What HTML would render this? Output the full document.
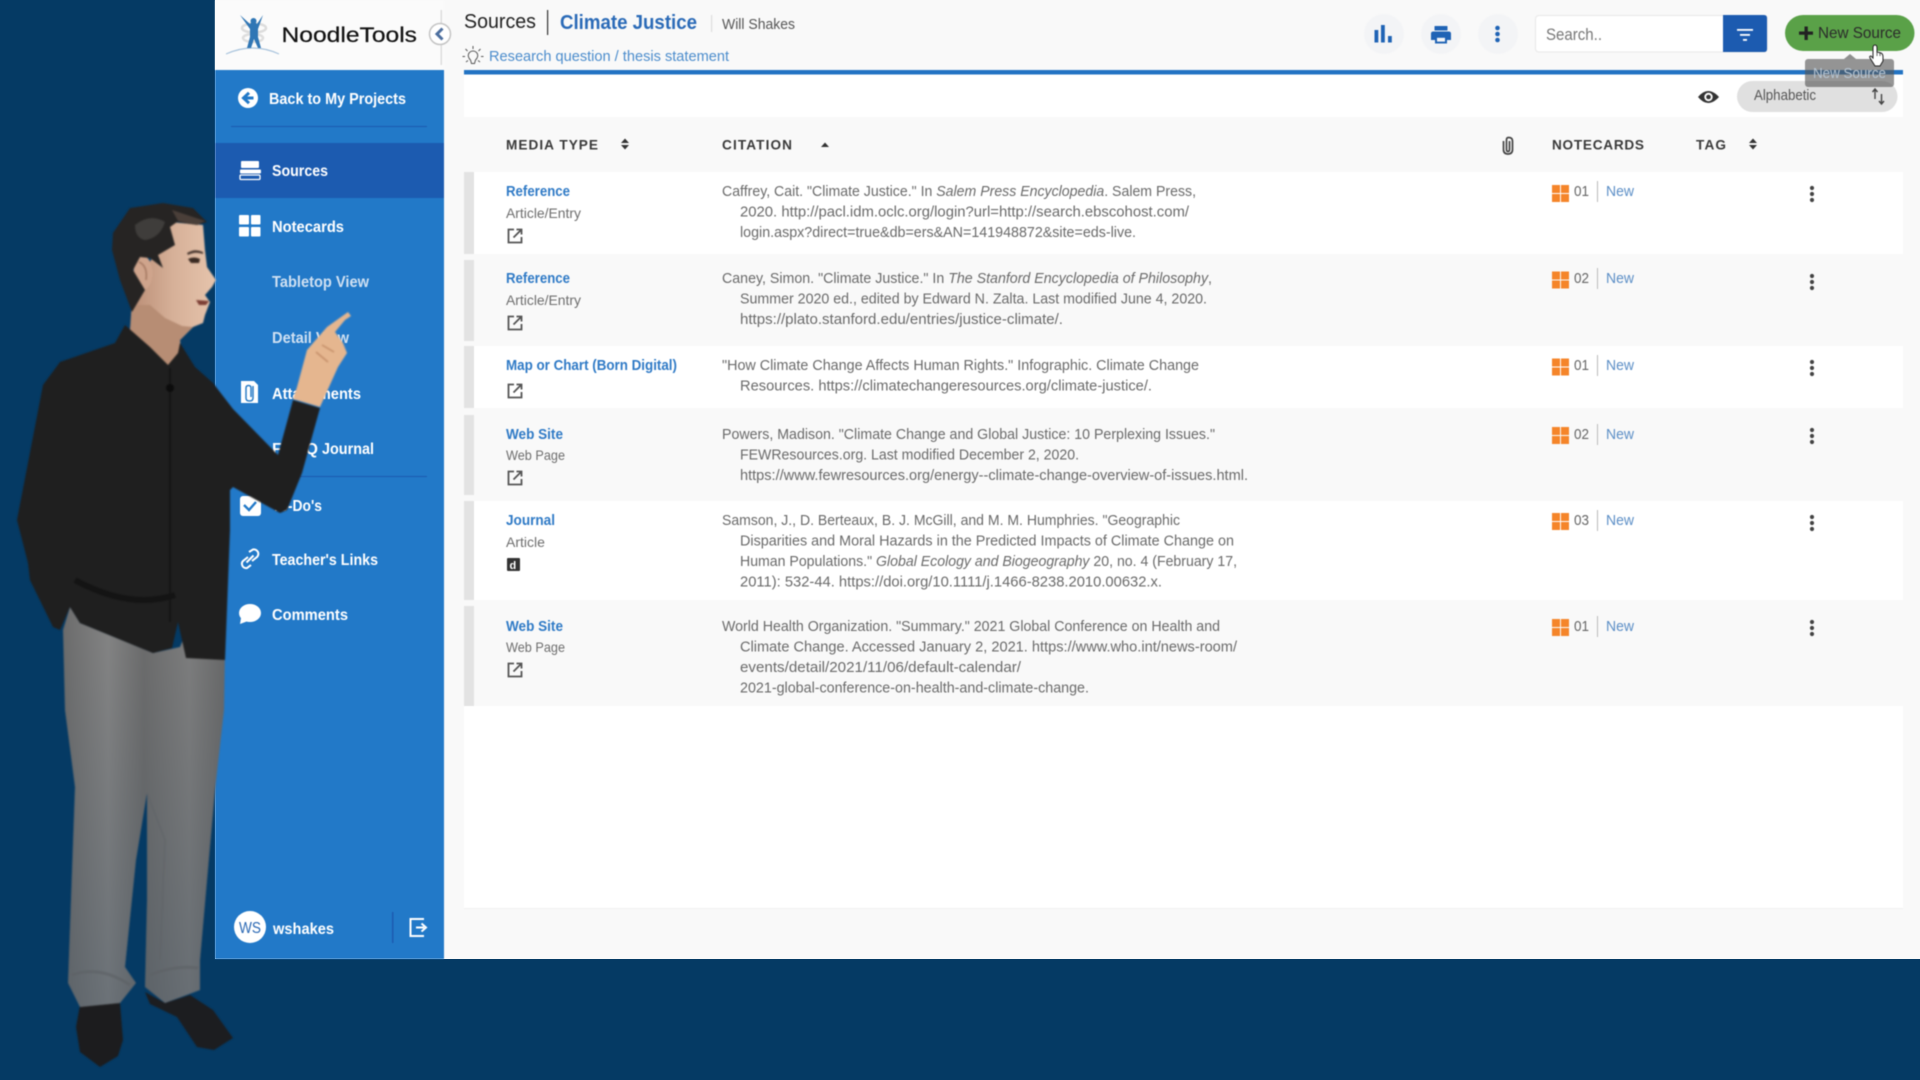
<!DOCTYPE html>
<html><head><meta charset="utf-8"><title>NoodleTools</title>
<style>
html,body{margin:0;padding:0;width:1920px;height:1080px;overflow:hidden;background:#053a64}
#under{position:absolute;left:215px;top:0;width:1705px;height:959px;background:#f9f9f9}
svg{display:block;position:absolute;left:0;top:0}
text{font-family:"Liberation Sans",sans-serif;white-space:pre}
.c{font-size:14.6px;fill:#6a6a6a}
.l{font-size:14.6px;fill:#2f7ac6;font-weight:bold}
.s{font-size:14px;fill:#6e6e6e}
.n{font-size:15px;fill:#666}
.w{font-size:14.6px;fill:#5b8ec6}
.h{font-size:13.6px;font-weight:bold;fill:#3a3a3a}
.m{font-size:16px;font-weight:bold;fill:#fff}
.m2{font-size:16px;font-weight:bold;fill:#cfe0f2}
</style></head><body>
<div id="under"></div>
<svg width="1920" height="1080" viewBox="0 0 1920 1080" xmlns="http://www.w3.org/2000/svg" style="filter:blur(.4px)">
<defs>
<linearGradient id="pants" x1="0" y1="0" x2="1" y2="0"><stop offset="0" stop-color="#6c6c6c"/><stop offset=".28" stop-color="#848484"/><stop offset=".5" stop-color="#6c6c6c"/><stop offset=".78" stop-color="#7e7e7e"/><stop offset="1" stop-color="#696969"/></linearGradient>
<linearGradient id="dim" x1="0" y1="0" x2="0" y2="1"><stop offset="0" stop-color="#3e4c58" stop-opacity="0"/><stop offset="1" stop-color="#3e5060" stop-opacity=".35"/></linearGradient>
<linearGradient id="skin" x1="0" y1="0" x2="1" y2="0"><stop offset="0" stop-color="#b98c74"/><stop offset=".5" stop-color="#d6b098"/><stop offset="1" stop-color="#e6c4ac"/></linearGradient>
<g id="ext" fill="none" stroke="#555" stroke-width="1.800"><path d="M-1-6.500H-6.500V6.500H6.500V1"/><path d="M-1.500 1.500L6-6M1.500-6.500H6.500V-1.500"/></g>
<g id="grid" fill="#f5852a"><rect x="0" y="0" width="8" height="8"/><rect x="9" y="0" width="8" height="8"/><rect x="0" y="9" width="8" height="8"/><rect x="9" y="9" width="8" height="8"/></g>
<g id="keb" fill="#444"><circle cx="0" cy="-6" r="2.100"/><circle cx="0" cy="0" r="2.100"/><circle cx="0" cy="6" r="2.100"/></g>
<g id="sort" fill="#333"><path d="M-4-1L0-5.500 4-1Z"/><path d="M-4 1L0 5.500 4 1Z"/></g>
</defs>

<!-- sidebar -->
<rect x="215" y="70" width="229" height="889" fill="#2279c8"/>
<rect x="215" y="0" width="229" height="70" fill="#fbfbfb"/>
<rect x="215" y="143" width="229" height="55" fill="#1c5bb0"/>
<rect x="231" y="126" width="196" height="1" fill="#1c5bb0"/>
<rect x="231" y="476" width="196" height="1" fill="#1c5bb0"/>

<!-- logo -->
<path d="M226 54Q253 42 279 54" fill="none" stroke="#a9c4dd" stroke-width="1.200"/>
<ellipse cx="254" cy="28" rx="12" ry="4.500" fill="none" stroke="#dcdcdc" stroke-width="2.500"/>
<ellipse cx="253" cy="38" rx="10" ry="4" fill="none" stroke="#dedede" stroke-width="2.500"/>
<path d="M240 15L250 24L253 20L257 24L263 15L258 29L258 37L261 48H258L254 39L251 48H247L250 37L250 29Z" fill="#2f76b5"/>
<circle cx="253.500" cy="21" r="3" fill="#2f76b5"/>
<text x="281.500" y="42" fill="#111" textLength="135.500" lengthAdjust="spacingAndGlyphs" style="font-size:21px;stroke:#111;stroke-width:.2px">NoodleTools</text>
<rect x="440.500" y="10" width="1.500" height="55" fill="#ddd"/>
<circle cx="440" cy="34" r="10.500" fill="#fff" stroke="#c4c4c4" stroke-width="1.500"/>
<path d="M442.500 28.500L437 34L442.500 39.500" fill="none" stroke="#4d6f9f" stroke-width="3"/>

<!-- sidebar icons -->
<circle cx="248" cy="98" r="10" fill="#fff"/>
<path d="M253.500 98H245M249 92.800L243.500 98L249 103.200" fill="none" stroke="#2279c8" stroke-width="3"/>
<rect x="241" y="161" width="18" height="7" rx="1" fill="#fff"/>
<rect x="240" y="169.500" width="21" height="4" rx="1" fill="#fff"/>
<rect x="240" y="175" width="20" height="4.500" rx="1" fill="none" stroke="#fff" stroke-width="1.300"/>
<g fill="#fff"><rect x="239" y="215" width="10" height="9.500" rx="1"/><rect x="251" y="215" width="9.500" height="9.500" rx="1"/><rect x="239" y="227" width="10" height="9.500" rx="1"/><rect x="251" y="227" width="9.500" height="9.500" rx="1"/></g>
<path d="M241 381H254L258 385V403H241Z" fill="#fff"/>
<path d="M253 386V398Q253 401 249.500 401Q246 401 246 398V388Q246 385.500 248.500 385.500Q251 385.500 251 388V397" fill="none" stroke="#2a7cc6" stroke-width="1.500"/>
<rect x="240" y="496" width="21" height="20" rx="3" fill="#fff"/>
<path d="M244 505L249 510L256 502" fill="none" stroke="#2279c8" stroke-width="2.400"/>
<g fill="none" stroke="#fff" stroke-width="2"><path d="M249 552L253 549.500Q256 549 258 552Q259 555 257 557L252 561"/><path d="M251 565L247 568Q244 568.500 242.500 566Q241 563 243 561L248 557"/><path d="M246.500 562.500L253.500 555.500"/></g>
<ellipse cx="250" cy="613" rx="11" ry="9" fill="#fff"/>
<path d="M241 618L240 624L248 621Z" fill="#fff"/>

<!-- sidebar text -->
<text class="m" x="269" y="104" textLength="137" lengthAdjust="spacingAndGlyphs">Back to My Projects</text>
<text class="m" x="272" y="176" textLength="56" lengthAdjust="spacingAndGlyphs">Sources</text>
<text class="m" x="272" y="232" textLength="72" lengthAdjust="spacingAndGlyphs">Notecards</text>
<text class="m2" x="272" y="287" textLength="97" lengthAdjust="spacingAndGlyphs">Tabletop View</text>
<text class="m2" x="272" y="343" textLength="77" lengthAdjust="spacingAndGlyphs">Detail View</text>
<text class="m" x="272" y="399" textLength="89" lengthAdjust="spacingAndGlyphs">Attachments</text>
<text class="m" x="272" y="454" textLength="46" lengthAdjust="spacing">FRQ</text>
<text class="m" x="322" y="454" textLength="52" lengthAdjust="spacingAndGlyphs">Journal</text>
<text class="m" x="272" y="511" textLength="50" lengthAdjust="spacingAndGlyphs">To-Do's</text>
<text class="m" x="272" y="565" textLength="106" lengthAdjust="spacingAndGlyphs">Teacher's Links</text>
<text class="m" x="272" y="620" textLength="76" lengthAdjust="spacingAndGlyphs">Comments</text>

<circle cx="250" cy="927" r="16" fill="#fff"/>
<text x="239" y="933" style="font-size:16px" fill="#2a68b4" textLength="22" lengthAdjust="spacingAndGlyphs">WS</text>
<text class="m" x="273" y="934" textLength="61" lengthAdjust="spacingAndGlyphs">wshakes</text>
<rect x="392" y="912" width="1.500" height="31" fill="#1c5bb0"/>
<path d="M423 920V919H410.500V936H423V935" fill="none" stroke="#fff" stroke-width="2"/>
<path d="M416 927.500H424M421.500 923.500L426 927.500L421.500 931.500" fill="none" stroke="#fff" stroke-width="2"/>

<!-- main panel -->
<rect x="464" y="74" width="1439" height="834" fill="#fff"/>
<rect x="464" y="908" width="1439" height="1" fill="#f0f0f0"/>
<rect x="464" y="70" width="1439" height="4.500" fill="#2273c3"/>
<rect x="464" y="117" width="1439" height="55" fill="#f9f9f9"/>
<rect x="464" y="254" width="1439" height="92" fill="#f9f9f9"/>
<rect x="464" y="408" width="1439" height="93" fill="#f9f9f9"/>
<rect x="464" y="600" width="1439" height="106" fill="#f9f9f9"/>
<g fill="#e3e3e3">
<rect x="464" y="172" width="10" height="82"/>
<rect x="464" y="260" width="10" height="81"/>
<rect x="464" y="346" width="10" height="62"/>
<rect x="464" y="415" width="10" height="80"/>
<rect x="464" y="501" width="10" height="99"/>
<rect x="464" y="606" width="10" height="100"/>
</g>

<!-- top bar -->
<text x="464" y="28" style="font-size:20.500px" fill="#222" textLength="72" lengthAdjust="spacingAndGlyphs">Sources</text>
<rect x="547" y="10" width="1.200" height="25" fill="#333"/>
<text x="560" y="29" style="font-size:20.500px;font-weight:bold" fill="#2a6ab7" textLength="137" lengthAdjust="spacingAndGlyphs">Climate Justice</text>
<rect x="711" y="15" width="1.200" height="17" fill="#ddd"/>
<text x="722" y="29" style="font-size:14.500px" fill="#555" textLength="73" lengthAdjust="spacingAndGlyphs">Will Shakes</text>
<g fill="none" stroke="#555" stroke-width="1"><path d="M470.500 60Q467.500 57 468.500 54Q470 51 473 51Q476 51 477.500 54Q478.500 57 475.500 60L474.500 63.500H471.500Z"/><path d="M473 46V49M465.500 49L467.500 51M480.500 49L478.500 51M465 56.500H462.500M481 56.500H483.500M466 62L468 60.500M480 62L478 60.500"/></g>
<text x="489" y="61" style="font-size:15px" fill="#4b8ccc" textLength="240" lengthAdjust="spacingAndGlyphs">Research question / thesis statement</text>

<g fill="#f3f4f6"><circle cx="1384" cy="34" r="20"/><circle cx="1441" cy="34" r="20"/><circle cx="1498" cy="34" r="20"/></g>
<g fill="#1f63b5"><rect x="1374.500" y="30" width="3.800" height="12.500"/><rect x="1381" y="25" width="3.800" height="17.500"/><rect x="1388" y="36" width="3.800" height="6.500"/></g>
<rect x="1434.500" y="26" width="13" height="4.500" rx=".5" fill="#1f63b5"/>
<path d="M1431 33.500Q1431 31.500 1433.500 31.500H1448.500Q1451 31.500 1451 33.500V40H1431Z" fill="#1f63b5"/>
<rect x="1435" y="36" width="12" height="7.500" fill="#1f63b5"/>
<rect x="1437" y="37.800" width="8" height="3.800" fill="#f3f4f6"/>
<g fill="#1f63b5"><circle cx="1497.500" cy="28" r="2.300"/><circle cx="1497.500" cy="34" r="2.300"/><circle cx="1497.500" cy="40" r="2.300"/></g>

<rect x="1535.500" y="15.500" width="232" height="36.500" rx="3.500" fill="#fff" stroke="#e8e8e8"/>
<path d="M1723 15H1764Q1767 15 1767 18V49Q1767 52 1764 52H1723Z" fill="#1c5bb0"/>
<g fill="#fff"><rect x="1737" y="29" width="16" height="1.800"/><rect x="1740" y="34" width="10" height="1.800"/><rect x="1743" y="39" width="4" height="1.800"/></g>
<text x="1546" y="40" style="font-size:16.500px" fill="#777" textLength="56" lengthAdjust="spacingAndGlyphs">Search..</text>

<rect x="1785" y="15" width="129.500" height="36" rx="18" fill="#5aa148"/>
<path d="M1804.500 26.500H1807.800V31.500H1813V34.800H1807.800V40H1804.500V34.800H1799V31.500H1804.500Z" fill="#222"/>
<text x="1818" y="38" style="font-size:16px" fill="#2b2b2b" textLength="83" lengthAdjust="spacingAndGlyphs">New Source</text>

<!-- eye & sort pill -->
<path d="M1698 97Q1708 85 1719 97Q1708 109 1698 97Z" fill="#333"/>
<circle cx="1708.500" cy="97" r="4.200" fill="#fff"/><circle cx="1708.500" cy="97" r="2.300" fill="#333"/>
<rect x="1737" y="81" width="160.500" height="31" rx="15.500" fill="#e0e0e0"/>
<text x="1754" y="100" style="font-size:14.500px" fill="#555" textLength="62" lengthAdjust="spacingAndGlyphs">Alphabetic</text>
<g fill="none" stroke="#444" stroke-width="1.400"><path d="M1875 99V90M1872.500 92L1875 89L1877.500 92"/><path d="M1881.500 94V103M1879 101L1881.500 104L1884 101"/></g>

<!-- tooltip -->
<path d="M1850 54L1856 59H1844Z" fill="#8f8f8f"/>
<rect x="1805" y="59" width="89" height="28" rx="3" fill="#555" fill-opacity=".62"/>
<text x="1813" y="78" style="font-size:14.500px" fill="#b7c5d2" textLength="73" lengthAdjust="spacingAndGlyphs">New Source</text>

<!-- cursor -->
<path d="M1873 48Q1873 45 1875 45Q1877 45 1877 48V52L1881 53Q1883 54 1883 57V61L1880 66H1875L1870 58Q1869 56 1871 56L1873 58Z" fill="#fff" stroke="#222" stroke-width="1"/>
<path d="M1877 52V56M1880 53V56" stroke="#222" stroke-width=".7" fill="none"/>

<!-- table head -->
<text class="h" x="506" y="149.500" textLength="92" lengthAdjust="spacing">MEDIA TYPE</text>
<use href="#sort" x="625" y="144"/>
<text class="h" x="722" y="149.500" textLength="70" lengthAdjust="spacing">CITATION</text>
<path d="M821 147L825 142.500L829 147Z" fill="#333"/>
<path d="M1509.500 141V149.500Q1509.500 151.500 1508 151.500Q1506.500 151.500 1506.500 149.500V140Q1506.500 137.500 1508.500 137.500Q1512.500 137.500 1512.500 141V149.500Q1512.500 154 1508 154Q1503.500 154 1503.500 149.500V141" fill="none" stroke="#444" stroke-width="1.700"/>
<text class="h" x="1552" y="149.500" textLength="92" lengthAdjust="spacing">NOTECARDS</text>
<text class="h" x="1696" y="149.500" textLength="30" lengthAdjust="spacing">TAG</text>
<use href="#sort" x="1753" y="144"/>

<!-- row 1 -->
<text class="l" x="506" y="196" textLength="64" lengthAdjust="spacingAndGlyphs">Reference</text>
<text class="s" x="506" y="218" textLength="75" lengthAdjust="spacingAndGlyphs">Article/Entry</text>
<use href="#ext" x="515" y="236"/>
<text class="c" x="722" y="196" textLength="474" lengthAdjust="spacingAndGlyphs">Caffrey, Cait. "Climate Justice." In <tspan font-style="italic">Salem Press Encyclopedia</tspan>. Salem Press,</text>
<text class="c" x="740" y="216.500" textLength="449" lengthAdjust="spacingAndGlyphs">2020. http://pacl.idm.oclc.org/login?url=http://search.ebscohost.com/</text>
<text class="c" x="740" y="237" textLength="396" lengthAdjust="spacingAndGlyphs">login.aspx?direct=true&amp;db=ers&amp;AN=141948872&amp;site=eds-live.</text>
<use href="#grid" x="1552" y="185"/><text class="n" x="1574" y="196" textLength="15" lengthAdjust="spacingAndGlyphs">01</text><rect x="1597" y="181" width="1" height="21" fill="#bbb"/><text class="w" x="1606" y="196" textLength="28" lengthAdjust="spacingAndGlyphs">New</text>
<use href="#keb" x="1812" y="194"/>

<!-- row 2 -->
<text class="l" x="506" y="283" textLength="64" lengthAdjust="spacingAndGlyphs">Reference</text>
<text class="s" x="506" y="305" textLength="75" lengthAdjust="spacingAndGlyphs">Article/Entry</text>
<use href="#ext" x="515" y="323"/>
<text class="c" x="722" y="283" textLength="490" lengthAdjust="spacingAndGlyphs">Caney, Simon. "Climate Justice." In <tspan font-style="italic">The Stanford Encyclopedia of Philosophy</tspan>,</text>
<text class="c" x="740" y="303.500" textLength="467" lengthAdjust="spacingAndGlyphs">Summer 2020 ed., edited by Edward N. Zalta. Last modified June 4, 2020.</text>
<text class="c" x="740" y="324" textLength="323" lengthAdjust="spacingAndGlyphs">https://plato.stanford.edu/entries/justice-climate/.</text>
<use href="#grid" x="1552" y="271.500"/><text class="n" x="1574" y="283" textLength="15" lengthAdjust="spacingAndGlyphs">02</text><rect x="1597" y="268" width="1" height="21" fill="#bbb"/><text class="w" x="1606" y="283" textLength="28" lengthAdjust="spacingAndGlyphs">New</text>
<use href="#keb" x="1812" y="282"/>

<!-- row 3 -->
<text class="l" x="506" y="370" textLength="171" lengthAdjust="spacingAndGlyphs">Map or Chart (Born Digital)</text>
<use href="#ext" x="515" y="391"/>
<text class="c" x="722" y="370" textLength="477" lengthAdjust="spacingAndGlyphs">"How Climate Change Affects Human Rights." Infographic. Climate Change</text>
<text class="c" x="740" y="390.500" textLength="412" lengthAdjust="spacingAndGlyphs">Resources. https://climatechangeresources.org/climate-justice/.</text>
<use href="#grid" x="1552" y="358.500"/><text class="n" x="1574" y="370" textLength="15" lengthAdjust="spacingAndGlyphs">01</text><rect x="1597" y="355" width="1" height="21" fill="#bbb"/><text class="w" x="1606" y="370" textLength="28" lengthAdjust="spacingAndGlyphs">New</text>
<use href="#keb" x="1812" y="368"/>

<!-- row 4 -->
<text class="l" x="506" y="439" textLength="57" lengthAdjust="spacingAndGlyphs">Web Site</text>
<text class="s" x="506" y="460" textLength="59" lengthAdjust="spacingAndGlyphs">Web Page</text>
<use href="#ext" x="515" y="478"/>
<text class="c" x="722" y="439" textLength="493" lengthAdjust="spacingAndGlyphs">Powers, Madison. "Climate Change and Global Justice: 10 Perplexing Issues."</text>
<text class="c" x="740" y="459.500" textLength="339" lengthAdjust="spacingAndGlyphs">FEWResources.org. Last modified December 2, 2020.</text>
<text class="c" x="740" y="480" textLength="508" lengthAdjust="spacingAndGlyphs">https://www.fewresources.org/energy--climate-change-overview-of-issues.html.</text>
<use href="#grid" x="1552" y="427"/><text class="n" x="1574" y="439" textLength="15" lengthAdjust="spacingAndGlyphs">02</text><rect x="1597" y="424" width="1" height="21" fill="#bbb"/><text class="w" x="1606" y="439" textLength="28" lengthAdjust="spacingAndGlyphs">New</text>
<use href="#keb" x="1812" y="436"/>

<!-- row 5 -->
<text class="l" x="506" y="525" textLength="49" lengthAdjust="spacingAndGlyphs">Journal</text>
<text class="s" x="506" y="547">Article</text>
<rect x="507" y="558" width="13" height="13" rx="1" fill="#333"/>
<text x="509.500" y="569" style="font-size:11px;font-weight:bold" fill="#fff">d</text>
<text class="c" x="722" y="525" textLength="458" lengthAdjust="spacingAndGlyphs">Samson, J., D. Berteaux, B. J. McGill, and M. M. Humphries. "Geographic</text>
<text class="c" x="740" y="545.500" textLength="494" lengthAdjust="spacingAndGlyphs">Disparities and Moral Hazards in the Predicted Impacts of Climate Change on</text>
<text class="c" x="740" y="566" textLength="497" lengthAdjust="spacingAndGlyphs">Human Populations." <tspan font-style="italic">Global Ecology and Biogeography</tspan> 20, no. 4 (February 17,</text>
<text class="c" x="740" y="586.500" textLength="422" lengthAdjust="spacingAndGlyphs">2011): 532-44. https://doi.org/10.1111/j.1466-8238.2010.00632.x.</text>
<use href="#grid" x="1552" y="513"/><text class="n" x="1574" y="525" textLength="15" lengthAdjust="spacingAndGlyphs">03</text><rect x="1597" y="510" width="1" height="21" fill="#bbb"/><text class="w" x="1606" y="525" textLength="28" lengthAdjust="spacingAndGlyphs">New</text>
<use href="#keb" x="1812" y="523"/>

<!-- row 6 -->
<text class="l" x="506" y="631" textLength="57" lengthAdjust="spacingAndGlyphs">Web Site</text>
<text class="s" x="506" y="652" textLength="59" lengthAdjust="spacingAndGlyphs">Web Page</text>
<use href="#ext" x="515" y="670"/>
<text class="c" x="722" y="631" textLength="498" lengthAdjust="spacingAndGlyphs">World Health Organization. "Summary." 2021 Global Conference on Health and</text>
<text class="c" x="740" y="651.500" textLength="497" lengthAdjust="spacingAndGlyphs">Climate Change. Accessed January 2, 2021. https://www.who.int/news-room/</text>
<text class="c" x="740" y="672" textLength="281" lengthAdjust="spacingAndGlyphs">events/detail/2021/11/06/default-calendar/</text>
<text class="c" x="740" y="692.500" textLength="349" lengthAdjust="spacingAndGlyphs">2021-global-conference-on-health-and-climate-change.</text>
<use href="#grid" x="1552" y="619"/><text class="n" x="1574" y="631" textLength="15" lengthAdjust="spacingAndGlyphs">01</text><rect x="1597" y="616" width="1" height="21" fill="#bbb"/><text class="w" x="1606" y="631" textLength="28" lengthAdjust="spacingAndGlyphs">New</text>
<use href="#keb" x="1812" y="628"/>

<!-- presenter -->
<g style="filter:blur(.9px)">
<!-- shoes -->
<path d="M80 1005L76 1027L80 1052L100 1067L118 1056L123 1040L120 1003Z" fill="#1c1c1e"/>
<path d="M145 992L150 1004L177 1017L197 1047L214 1050L233 1038L213 1010L190 995L165 1003Z" fill="#1c1d20"/>
<!-- pants -->
<path d="M63 630L70 607L80 623L153 653L180 647L187 630L225 650L224 710L215 790L200 960L200 990L165 1003L145 987L147 900L147 793L136 860L125 967L136 983L120 1003L80 1007L68 983L75 787L65 710Z" fill="url(#pants)"/>
<path d="M63 630L70 607L80 623L153 653L180 647L187 630L225 650L224 710L215 790L200 960L200 990L165 1003L145 987L147 900L147 793L136 860L125 967L136 983L120 1003L80 1007L68 983L75 787L65 710Z" fill="url(#dim)"/>
<path d="M147 793L165 840L160 960" fill="none" stroke="#5f6468" stroke-width="2" opacity=".5"/>
<path d="M72 975Q100 965 130 985M150 975Q175 965 198 968" fill="none" stroke="#5e6266" stroke-width="3" opacity=".7"/>
<!-- neck & face -->
<path d="M132 300L130 330L168 372L181 352L180 340L193 327L203 323L205 315L210 302L205 295L212 287L216 280L207 267L205 250L203 225L170 222L150 262Z" fill="url(#skin)"/>
<path d="M133 305L150 305L165 318L182 326L193 327L180 340L181 352L168 372L130 330Z" fill="#b78d74"/>
<path d="M187 253Q195 248 203 252L203 254Q195 251 188 255Z" fill="#4a3830"/>
<path d="M188 259Q194 256 200 259L199 263H191Z" fill="#3a2a22"/>
<path d="M196 300L209 301L206 305L199 305Z" fill="#7c3f35"/>
<ellipse cx="143" cy="273" rx="9.500" ry="17" fill="#cfa48c"/>
<path d="M139 262Q148 266 146 280" fill="none" stroke="#a37760" stroke-width="1.500"/>
<!-- hair -->
<path d="M113 233L130 208L163 203L193 208L207 222L197 225L177 222L170 227L175 245L158 255L163 268L150 258L140 257L133 270L145 290L132 312L120 280L112 250Z" fill="#262423"/>
<path d="M135 225Q150 213 165 222Q160 238 145 240Q135 238 135 225Z" fill="#4a4846" opacity=".7"/>
<path d="M172 210L205 221L197 225L178 221Z" fill="#54463e" opacity=".8"/>
<!-- shirt -->
<path d="M125 325L115 343L60 362L43 385L17 520L28 563L30 580L53 627L60 630L70 607L80 623L153 653L172 648L178 622L186 658L225 660L230 530L230 490L233 487L280 513L287 510L302 473L320 408L293 400L278 455L233 409L213 383L195 367L180 343L178 353L168 365L150 347Z" fill="#1f1f1f"/>
<path d="M170 368V622" stroke="#151515" stroke-width="2" fill="none"/>
<path d="M75 580Q130 610 175 595" stroke="#141414" stroke-width="6" fill="none"/>
<circle cx="170" cy="388" r="4" fill="#0c0c0c"/>
<!-- hand -->
<path d="M293 399L297 387L307 350L327 327L348 312L351 316L345 320L335 332L343 343L347 353L338 367L320 407Z" fill="#e5b68f"/>
<path d="M322 345L334 352M316 352L328 362" stroke="#c48e68" stroke-width="1.500" fill="none"/>
</g>
</svg>
</body></html>
